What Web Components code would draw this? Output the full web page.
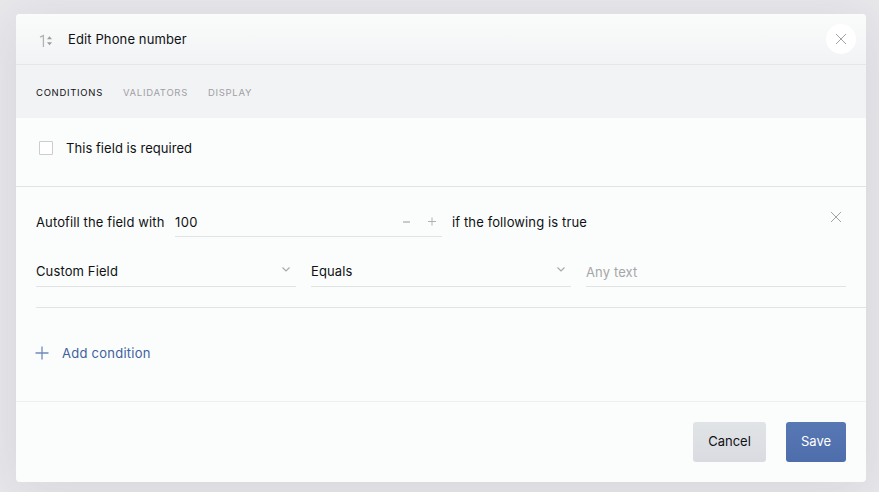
<!DOCTYPE html>
<html lang="en">
<head>
<meta charset="utf-8">
<title>Edit field</title>
<style>
  body {
    margin: 0;
    height: 492px;
    overflow: hidden;
    background: #e8e8eb;
    font-family: Inter, 'Liberation Sans', sans-serif;
    font-size: 13px;
    line-height: 20px;
    letter-spacing: .12px;
    color: #101114;
  }
</style>
</head>
<body>
<field-dialog>
  <dialog-header slot="header">Edit Phone number</dialog-header>
  <tab-bar slot="tabs">
    <tab-item active>Conditions</tab-item>
    <tab-item>Validators</tab-item>
    <tab-item>Display</tab-item>
  </tab-bar>
  <check-field>This field is required</check-field>
  <condition-group>
    <span slot="before">Autofill the field with</span>
    <number-field slot="value">100</number-field>
    <span slot="after">if the following is true</span>
    <select-field>Custom Field</select-field>
    <select-field>Equals</select-field>
    <text-field>Any text</text-field>
  </condition-group>
  <add-button>Add condition</add-button>
  <action-button slot="footer">Cancel</action-button>
  <action-button slot="footer" primary>Save</action-button>
</field-dialog>

<script>
const define = (name, html) => {
  const template = document.createElement('template');
  template.innerHTML = html;
  customElements.define(name, class extends HTMLElement {
    constructor() {
      super();
      this.attachShadow({ mode: 'open' }).append(template.content.cloneNode(true));
    }
  });
};

define('field-dialog', `
  <style>
    :host {
      display: flex;
      flex-direction: column;
      box-sizing: border-box;
      width: 850px;
      height: 468px;
      margin: 14px 0 0 16px;
      border-radius: 4px;
      overflow: hidden;
      background: #fbfdfc;
      box-shadow: 0 8px 50px rgba(40, 40, 75, .1);
    }
    main {
      flex: 1;
    }
    footer {
      display: flex;
      justify-content: flex-end;
      gap: 20px;
      padding: 20px;
      border-top: 1px solid #eeeff0;
    }
  </style>
  <slot name='header'></slot>
  <slot name='tabs'></slot>
  <main><slot></slot></main>
  <footer><slot name='footer'></slot></footer>
`);

define('dialog-header', `
  <style>
    :host {
      display: flex;
      align-items: center;
      box-sizing: border-box;
      height: 51px;
      padding: 0 10px 0 23px;
      background: linear-gradient(#fafcfb, #f2f3f5);
      border-bottom: 1px solid #e5e6e8;
    }
    .type {
      width: 29px;
      height: 16px;
      margin-top: 4px;
    }
    .title {
      flex: 1;
    }
    .close {
      display: flex;
      align-items: center;
      justify-content: center;
      width: 30px;
      height: 30px;
      border-radius: 50%;
      background: #fff;
    }
  </style>
  <svg class='type' viewBox='0 0 29 16' fill='none'>
    <path d='M1 4.2 4.4 2.6V14' stroke='#b2b3b5' stroke-width='1.3' />
    <path d='M8 6.2 10.5 3.2 13 6.2ZM8 9.2 10.5 12.2 13 9.2Z' fill='#9b9c9e' />
  </svg>
  <span class='title'><slot></slot></span>
  <span class='close'>
    <svg width='12' height='12' fill='none' stroke='#a0a1a3'>
      <path d='M1 1 11 11M11 1 1 11' />
    </svg>
  </span>
`);

define('tab-bar', `
  <style>
    :host {
      display: flex;
      align-items: center;
      gap: 20px;
      box-sizing: border-box;
      height: 53px;
      padding: 2px 20px 0;
      background: #f2f3f5;
    }
  </style>
  <slot></slot>
`);

define('tab-item', `
  <style>
    :host {
      display: block;
      font-size: 9.5px;
      letter-spacing: .7px;
      text-transform: uppercase;
      color: #9fa0a3;
    }
    :host([active]) {
      color: #101114;
    }
  </style>
  <slot></slot>
`);

define('check-field', `
  <style>
    :host {
      display: flex;
      align-items: center;
      gap: 13px;
      box-sizing: border-box;
      height: 69px;
      padding: 0 23px 8px;
      border-bottom: 1px solid #e2e4e4;
      letter-spacing: .05px;
    }
    .box {
      box-sizing: border-box;
      width: 14px;
      height: 14px;
      border: 1px solid #cbcccd;
      border-radius: 1px;
      background: #fff;
    }
  </style>
  <span class='box'></span>
  <span><slot></slot></span>
`);

define('condition-group', `
  <style>
    :host {
      display: block;
      box-sizing: border-box;
      height: 121px;
      margin-left: 20px;
      padding: 20px 20px 0 0;
      border-bottom: 1px solid #e2e4e4;
    }
    .sentence {
      display: flex;
      align-items: center;
      height: 30px;
    }
    .before {
      width: 139px;
    }
    .after {
      flex: 1;
      margin-left: 10px;
    }
    .remove {
      margin: -11px 4px 0 0;
    }
    .rule {
      display: grid;
      grid-template-columns: repeat(3, 260px);
      gap: 15px;
      margin-top: 15px;
    }
  </style>
  <div class='sentence'>
    <span class='before'><slot name='before'></slot></span>
    <slot name='value'></slot>
    <span class='after'><slot name='after'></slot></span>
    <svg class='remove' width='12' height='12' fill='none' stroke='#a0a1a3'>
      <path d='M1 1 11 11M11 1 1 11' />
    </svg>
  </div>
  <div class='rule'><slot></slot></div>
`);

define('number-field', `
  <style>
    :host {
      display: flex;
      align-items: center;
      box-sizing: border-box;
      width: 267px;
      height: 30px;
      border-bottom: 1px solid #e2e4e4;
      letter-spacing: .4px;
    }
    .value {
      flex: 1;
    }
    svg {
      margin-right: 5px;
    }
  </style>
  <span class='value'><slot></slot></span>
  <svg width='35' height='9' fill='none'>
    <path d='M1 5H8' stroke='#97989a' />
    <path d='M26 4.5H34M30 .5V8.5' stroke='#b0b1b3' />
  </svg>
`);

define('select-field', `
  <style>
    :host {
      display: flex;
      align-items: center;
      box-sizing: border-box;
      height: 35px;
      padding-top: 4px;
      border-bottom: 1px solid #e2e4e4;
    }
    .value {
      flex: 1;
    }
    svg {
      margin: -3px 6px 0 0;
    }
  </style>
  <span class='value'><slot></slot></span>
  <svg width='8' height='5' fill='none' stroke='#a8a9ab' stroke-width='1.2'>
    <path d='M.5 .5 4 4 7.5 .5' />
  </svg>
`);

define('text-field', `
  <style>
    :host {
      display: flex;
      align-items: center;
      box-sizing: border-box;
      height: 35px;
      padding-top: 6px;
      border-bottom: 1px solid #e2e4e4;
      color: #a5a6a8;
    }
  </style>
  <slot></slot>
`);

define('add-button', `
  <style>
    :host {
      display: flex;
      align-items: center;
      gap: 13px;
      height: 20px;
      margin: 35px 0 0 19px;
      letter-spacing: .25px;
      color: #40609f;
    }
  </style>
  <svg width='14' height='14' fill='none' stroke='#7089bd' stroke-width='1.3'>
    <path d='M.5 7H13.5M7 .5V13.5' />
  </svg>
  <span><slot></slot></span>
`);

define('action-button', `
  <style>
    :host {
      display: flex;
      align-items: center;
      justify-content: center;
      box-sizing: border-box;
      width: 73px;
      height: 40px;
      padding-bottom: 2px;
      border-radius: 3px;
      background: linear-gradient(#e1e4e6, #d9dbe1);
      letter-spacing: 0;
    }
    :host([primary]) {
      width: 60px;
      background: linear-gradient(#5878b4, #4e6dab);
      color: #fff;
    }
  </style>
  <slot></slot>
`);
</script>
</body>
</html>
